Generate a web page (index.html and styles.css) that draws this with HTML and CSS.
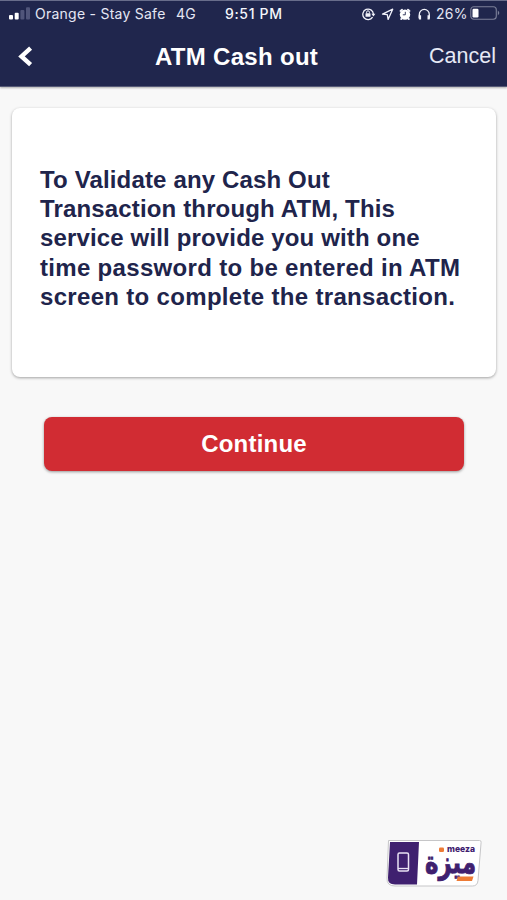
FILE: index.html
```html
<!DOCTYPE html>
<html lang="en">
<head>
<meta charset="utf-8">
<title>ATM Cash out</title>
<link rel="stylesheet" href="styles.css">
</head>
<body>
<header class="header">
  <div class="status">
    <svg class="signal" width="22" height="13" viewBox="0 0 22 13"><rect x="0" y="8" width="4" height="4.500" rx="1" fill="#fff"/><rect x="5.700" y="5.800" width="4" height="6.700" rx="1" fill="#fff"/><rect x="11.400" y="3" width="4" height="9.500" rx="1" fill="#50557a"/><rect x="17" y="0.300" width="4" height="12.200" rx="1" fill="#50557a"/></svg>
    <span class="carrier">Orange - Stay Safe</span>
    <span class="network">4G</span>
    <span class="clock">9:51 PM</span>
    <svg class="indicators" width="72" height="16" viewBox="0 0 72 16" fill="none" stroke="#f1f2fa" stroke-width="1.3">
      <path d="M10.600 11.200A5.300 5.300 0 1 1 11.400 8"/><path d="M9.400 7.800h4l-2 2.700z" fill="#f1f2fa" stroke="none"/><rect x="3.500" y="7.200" width="5" height="3.600" rx=".6" fill="#f1f2fa" stroke="none"/><path d="M4.600 7.400V6.200a1.400 1.400 0 0 1 2.800 0v1.200" stroke-width="1"/>
      <path d="M20.500 8.100 30.700 3.200 26.100 13.400 25.300 8.700z" stroke-linejoin="round"/>
      <circle cx="43" cy="8.600" r="5.200" fill="#fff" stroke="none"/><path d="M38.500 5 40 3.700M46 3.700l1.500 1.300M39.800 12.200l-.6.900M46.200 12.200l.6.900" stroke-width="1.900" stroke-linecap="round"/><path d="M43.300 5.800v3h-2.500" stroke="#22274e" stroke-width=".9"/>
      <path d="M57.300 12V8.400a5 5 0 0 1 10 0V12"/><path d="M56.700 9.200h2.400v4.400h-1.200q-1.200 0-1.200-1.200zM67.900 9.200h-2.400v4.400h1.200q1.200 0 1.200-1.200z" fill="#f1f2fa" stroke="none"/>
    </svg>
    <span class="percent">26%</span>
    <svg class="battery" width="31" height="15" viewBox="0 0 31 15"><rect x=".8" y=".8" width="25.500" height="12.400" rx="3" fill="none" stroke="#7c8099" stroke-width="1.100"/><rect x="2.500" y="2.700" width="6" height="8.800" rx="1.200" fill="#fff"/><path d="M27.800 4.600q3 2.400 0 4.800z" fill="#7c8099"/></svg>
  </div>
  <nav class="nav">
    <svg class="back" width="16" height="22" viewBox="0 0 16 22"><path d="M13.600 2.200 4.500 10.400 13.600 18.600" fill="none" stroke="#fff" stroke-width="4.400"/></svg>
    <h1 class="title">ATM Cash out</h1>
    <span class="cancel">Cancel</span>
  </nav>
</header>
<main class="content">
  <section class="card">
    <p class="message">To Validate any Cash Out<br>Transaction through ATM, This<br>service will provide you with one<br><span class="wide">time password to be entered in ATM<br>screen to complete the transaction.</span></p>
  </section>
  <button class="continue">Continue</button>
</main>
<footer class="footer">
  <svg class="logo" width="98" height="48" viewBox="0 0 98 48">
    <path d="M3.500 1.500h91q1.800 0 1.600 1.800L93 41.500q-.5 5.500-5.500 5.500H10q-8.500 0-8-8z" fill="#fff" stroke="#c6c6c8"/>
    <path d="M5 3h29l-2 42.500H10q-7.500 0-7-7z" fill="#3f206f"/>
    <g fill="none" stroke="#e9e1f3"><rect x="13" y="14" width="10.500" height="18" rx="1.500" stroke-width="1.500"/><path d="M13 29.500h10.500" stroke-width="1.300"/></g>
    <g transform="translate(0 34) scale(1 1.15)"><text class="brand-ar" x="65.500" y="0" text-anchor="middle" textLength="51" lengthAdjust="spacingAndGlyphs">ميزة</text></g>
    <text class="brand" x="62" y="12.800" textLength="28" lengthAdjust="spacingAndGlyphs">meeza</text>
    <rect x="54" y="8.500" width="5" height="4.600" rx="1.300" fill="#ed7b35"/>
    <path d="M73 37.500h15.500l-1.500 4.500H71.500z" fill="#ed7b35"/>
  </svg>
</footer>
</body>
</html>
```
FILE: styles.css
```css
* { box-sizing: border-box; }
body { margin: 0; height: 900px; display: flex; flex-direction: column; background: #f8f8f8; font-family: "Liberation Sans", Arial, sans-serif; overflow: hidden; }
.header { height: 87px; background: #20264d; border-top: 1px solid #686d8b; border-bottom: 1px solid #555976; box-shadow: 0 1px 2px rgba(0,0,0,.3); color: #fff; }
.status { height: 25px; display: flex; align-items: center; padding-left: 9px; font-family: Inter, sans-serif; font-size: 14px; color: #e5e7f4; white-space: nowrap; }
.signal { flex: none; }
.carrier { width: 137px; margin-left: 4px; letter-spacing: .25px; }
.network { width: 49px; margin-left: 4px; letter-spacing: .3px; }
.clock { width: 60px; font-weight: 500; letter-spacing: .65px; color: #f5f6fc; }
.indicators { margin-left: 77px; flex: none; }
.percent { width: 33px; margin-left: 2px; letter-spacing: .3px; }
.battery { flex: none; margin-left: 1px; }
.nav { height: 61px; display: flex; align-items: center; padding: 0 11px 0 17px; }
.back { flex: none; }
.title { width: 166px; margin: 0 auto 0 122px; font-size: 24px; font-weight: 700; letter-spacing: .3px; line-height: 28px; white-space: nowrap; }
.cancel { font-size: 21.5px; color: #e7e9f5; }
.content { flex: 1; display: flex; flex-direction: column; padding: 21px 11px 0 12px; }
.card { height: 269px; padding: 57px 28px; border-radius: 8px; background: #fff; box-shadow: 0 1px 3px rgba(0,0,0,.35); }
.message { margin: 0; color: #20244b; font-size: 24px; font-weight: 700; letter-spacing: .15px; line-height: 29.2px; white-space: nowrap; }
.wide { letter-spacing: .32px; }
.continue { width: 420px; height: 54px; margin: 40px 0 0 32px; padding: 0; border: 0; border-radius: 8px; background: #d12c33; box-shadow: 0 1px 3px rgba(0,0,0,.4); color: #fff; font: 700 24px "Liberation Sans", Arial, sans-serif; letter-spacing: .2px; }
.footer { display: flex; justify-content: flex-end; padding: 0 24px 13px 0; }
.logo { overflow: visible; }
.brand-ar { font: 700 27px "DejaVu Sans", sans-serif; fill: #3f206f; stroke: #3f206f; stroke-width: .8px; }
.brand { font: 800 9px Inter, sans-serif; fill: #3f206f; }
```
